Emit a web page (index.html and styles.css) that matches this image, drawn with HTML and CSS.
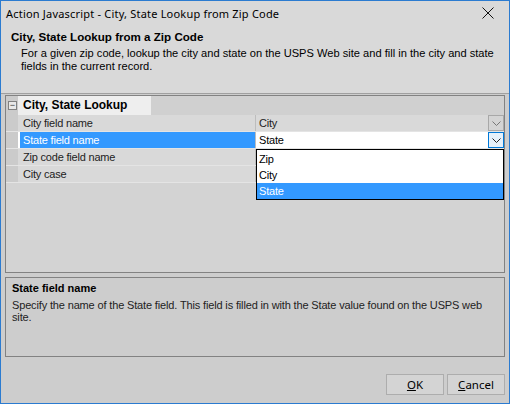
FILE: index.html
```html
<!DOCTYPE html>
<html lang="en">
<head>
  <meta charset="UTF-8" />
  <title>Action Javascript - City, State Lookup from Zip Code</title>
  <link rel="stylesheet" href="styles.css">
</head>
<body>
  <div class="window">
    <div class="titlebar">
      <span class="title">Action Javascript - City, State Lookup from Zip Code</span>
      <svg class="close" width="12" height="12" viewBox="0 0 12 12">
        <path d="M0.5 0.5 L11.5 11.5 M11.5 0.5 L0.5 11.5" stroke="#111" stroke-width="1" fill="none" />
      </svg>
    </div>

    <div class="header">
      <div class="header-title">City, State Lookup from a Zip Code</div>
      <div class="header-desc">For a given zip code, lookup the city and state on the USPS Web site and fill in the city and state<br>fields in the current record.</div>
    </div>

    <div class="content">
      <div class="grid">
        <div class="category">
          <div class="margin">
            <span class="toggle">&minus;</span>
          </div>
          <div class="category-label">City, State Lookup</div>
        </div>

        <div class="row">
          <div class="margin"></div>
          <div class="name">City field name</div>
          <div class="value">
            <span>City</span>
            <span class="drop-btn">
              <svg width="9" height="5" viewBox="0 0 9 5"><path d="M0.5 0.5 L4.5 4.5 L8.5 0.5" stroke="#777" fill="none" /></svg>
            </span>
          </div>
        </div>

        <div class="row selected">
          <div class="margin"></div>
          <div class="name"><span class="sel-label">State field name</span></div>
          <div class="value editing">
            <span>State</span>
            <span class="drop-btn active">
              <svg width="9" height="5" viewBox="0 0 9 5"><path d="M0.5 0.5 L4.5 4.5 L8.5 0.5" stroke="#222" fill="none" /></svg>
            </span>
            <div class="dropdown">
              <div class="option">Zip</div>
              <div class="option">City</div>
              <div class="option current">State</div>
            </div>
          </div>
        </div>

        <div class="row">
          <div class="margin"></div>
          <div class="name">Zip code field name</div>
          <div class="value"></div>
        </div>

        <div class="row">
          <div class="margin"></div>
          <div class="name">City case</div>
          <div class="value"></div>
        </div>
      </div>

      <div class="help">
        <div class="help-title">State field name</div>
        <div class="help-desc">Specify the name of the State field. This field is filled in with the State value found on the USPS web<br>site.</div>
      </div>

      <div class="buttons">
        <button class="btn"><u>O</u>K</button>
        <button class="btn"><u>C</u>ancel</button>
      </div>
    </div>
  </div>
</body>
</html>
```

FILE: styles.css
```css
* {
  box-sizing: border-box;
  margin: 0;
  padding: 0;
}

html, body {
  width: 510px;
  height: 404px;
  overflow: hidden;
  background: #cdcdcd;
}

.window {
  width: 510px;
  height: 404px;
  border: 1px solid #2b7bd0;
  background: #cdcdcd;
  font-family: "Liberation Sans", Arial, sans-serif;
  font-size: 11px;
  letter-spacing: -0.2px;
  color: #111;
}

/* title and header share the light top band */
.titlebar {
  height: 24px;
  background: #d9d9d9;
  display: flex;
  align-items: center;
  justify-content: space-between;
  padding: 0 15px 0 5px;
  font-family: "Noto Sans", sans-serif;
  font-size: 11px;
  letter-spacing: 0.2px;
  color: #000;
}

.close {
  display: block;
}

.header {
  background: #d9d9d9;
  height: 69px;
  padding: 4px 0 0 10px;
  border-bottom: 1px solid #a0a0a0;
  font-size: 11.1px;
  letter-spacing: 0;
  color: #000;
}

.header-title {
  font-weight: bold;
  font-size: 11.6px;
  line-height: 16px;
}

.header-desc {
  padding-left: 10px;
  margin-top: 2px;
  line-height: 13px;
  white-space: nowrap;
}

.content {
  padding: 1px 4px 0 4px;
}

.grid {
  height: 178px;
  border: 1px solid #828282;
  background: #d3d3d3;
}

.category {
  display: flex;
  height: 19px;
  background: #d0d0d0;
}

.margin {
  width: 12px;
  flex: none;
  background: #cbcbcb;
  display: flex;
  align-items: center;
  justify-content: center;
}

.toggle {
  width: 9px;
  height: 9px;
  border: 1px solid #808080;
  background: #e8e8e8;
  font-size: 9px;
  line-height: 6px;
  text-align: center;
  color: #333;
  margin-left: 1px;
  letter-spacing: 0;
}

.category-label {
  width: 133px;
  background: #eeeeee;
  font-weight: bold;
  font-size: 12px;
  letter-spacing: 0;
  line-height: 19px;
  padding-left: 5px;
  color: #000;
}

.row {
  display: flex;
  height: 17px;
  border-bottom: 1px solid #e4e4e4;
}

.name {
  width: 238px;
  flex: none;
  line-height: 16px;
  padding-left: 5px;
  background: #d9d9d9;
  border-right: 1px solid #bdbdbd;
  color: #222;
}

.value {
  flex: 1;
  position: relative;
  display: flex;
  align-items: center;
  justify-content: space-between;
  padding-left: 3px;
  background: #d9d9d9;
  color: #222;
}

.selected .name {
  padding: 0 0 0 2px;
  background: #ffffff;
}

.sel-label {
  display: block;
  height: 16px;
  background: #3399ff;
  color: #fff;
  padding-left: 3px;
}

.value.editing {
  background: #ffffff;
  color: #000;
}

.drop-btn {
  width: 16px;
  height: 16px;
  border: 1px solid #a8a8a8;
  background: #d4d4d4;
  display: flex;
  align-items: center;
  justify-content: center;
}

.drop-btn.active {
  border-color: #0078d7;
  background: #e5f1fb;
}

.dropdown {
  position: absolute;
  top: 17px;
  left: 0;
  width: 248px;
  border: 1px solid #000;
  background: #fff;
  padding-top: 1px;
  z-index: 10;
}

.option {
  height: 16px;
  line-height: 16px;
  padding-left: 2px;
  color: #000;
}

.option.current {
  background: #3399ff;
  color: #fff;
}

.help {
  margin-top: 4px;
  height: 80px;
  border: 1px solid #828282;
  padding: 3px 0 0 6px;
}

.help-title {
  font-weight: bold;
  font-size: 11px;
  letter-spacing: 0;
  line-height: 15px;
  color: #000;
}

.help-desc {
  margin-top: 3px;
  line-height: 12px;
  white-space: nowrap;
  letter-spacing: -0.15px;
  color: #222;
}

.buttons {
  display: flex;
  justify-content: flex-end;
  gap: 3px;
  padding-top: 17px;
}

.btn {
  width: 58px;
  height: 21px;
  border: 1px solid #adadad;
  background: #d4d4d4;
  font-family: "Noto Sans", sans-serif;
  font-size: 11.5px;
  color: #000;
}
```
